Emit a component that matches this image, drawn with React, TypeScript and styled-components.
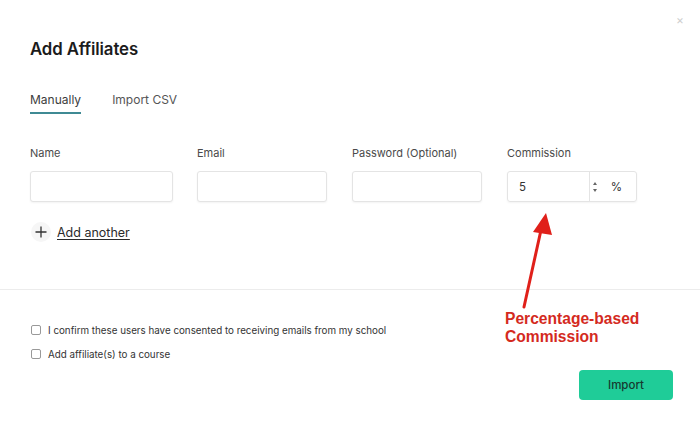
import React from "react";
import styled, { createGlobalStyle } from "styled-components";

const Global = createGlobalStyle`
  html, body { margin: 0; padding: 0; background: #fff; }
  body { font-family: Inter, "Noto Sans", "Liberation Sans", sans-serif; color: #222; }
  * { box-sizing: border-box; }
`;

const Page = styled.div`
  position: relative;
  width: 700px;
  height: 430px;
  background: #fff;
  overflow: hidden;
  display: flex;
  flex-direction: column;
`;

const Close = styled.div`
  position: absolute;
  top: 14px;
  right: 16px;
  font-size: 12px;
  color: #cfcfcf;
  line-height: 1;
`;

const Top = styled.div`
  padding: 38px 30px 0 30px;
  height: 290px;
  border-bottom: 1px solid #ececec;
`;

const Title = styled.h1`
  margin: 0;
  font-size: 16.8px;
  font-weight: 600;
  color: #1b1b1b;
  line-height: 22px;
  letter-spacing: -0.1px;
`;

const Tabs = styled.div`
  display: flex;
  gap: 31px;
  margin-top: 32px;
`;

const Tab = styled.div<{ $active?: boolean }>`
  font-size: 12px;
  color: ${(p) => (p.$active ? "#3d3d3d" : "#555")};
  padding-bottom: 4px;
  line-height: 16px;
  border-bottom: 2px solid ${(p) => (p.$active ? "#3f8a94" : "transparent")};
`;

const Fields = styled.div`
  display: grid;
  grid-template-columns: 143px 131px 131px 131px;
  column-gap: 24px;
  margin-top: 32px;
`;

const Field = styled.div`
  display: flex;
  flex-direction: column;
`;

const Label = styled.div`
  font-size: 11px;
  color: #4a4a4a;
  line-height: 14px;
  margin-bottom: 11px;
`;

const Input = styled.div<{ $w: number }>`
  width: ${(p) => p.$w}px;
  height: 31px;
  border: 1px solid #e4e4e4;
  border-radius: 3px;
  box-shadow: 0 1px 2px rgba(0, 0, 0, 0.05);
  background: #fff;
`;

const NumberGroup = styled.div`
  width: 130px;
  height: 31px;
  border: 1px solid #e4e4e4;
  border-radius: 3px;
  box-shadow: 0 1px 2px rgba(0, 0, 0, 0.05);
  display: flex;
  align-items: stretch;
  font-size: 11.5px;
  color: #333;
`;

const NumberValue = styled.div`
  width: 82px;
  border-right: 1px solid #e4e4e4;
  display: flex;
  align-items: center;
  padding-left: 11px;
`;

const Spinner = styled.div`
  width: 8px;
  display: flex;
  flex-direction: column;
  justify-content: center;
  align-items: center;
  gap: 4px;
  margin-left: 1px;
`;

const Unit = styled.div`
  flex: 1;
  display: flex;
  align-items: center;
  justify-content: center;
  font-size: 11.5px;
  padding-right: 2px;
`;

const AddRow = styled.div`
  display: flex;
  align-items: center;
  gap: 6px;
  margin-top: 20px;
  margin-left: 1px;
`;

const PlusCircle = styled.div`
  width: 20px;
  height: 20px;
  border-radius: 50%;
  background: #f6f6f6;
  display: flex;
  align-items: center;
  justify-content: center;
`;

const AddLink = styled.span`
  font-size: 12.5px;
  color: #2b2b2b;
  text-decoration: underline;
  text-underline-offset: 2px;
`;

const Bottom = styled.div`
  padding: 33px 30px 0 31px;
  display: flex;
  flex-direction: column;
`;

const CheckRow = styled.label`
  display: flex;
  align-items: center;
  gap: 7px;
  font-size: 9.8px;
  color: #333;
  height: 14px;
  margin-bottom: 10px;
`;

const Box = styled.span`
  width: 10px;
  height: 10px;
  border: 1px solid #999;
  border-radius: 2px;
  background: #fff;
`;

const Footer = styled.div`
  display: flex;
  justify-content: flex-end;
  margin-top: -1px;
`;

const ImportButton = styled.button`
  width: 94px;
  height: 30px;
  border: none;
  border-radius: 4px;
  background: #1fcc98;
  color: #163a30;
  font-family: Inter, "Noto Sans", sans-serif;
  font-size: 11.5px;
  font-weight: 500;
  margin-right: -3px;
`;

const Annotation = styled.div`
  position: absolute;
  left: 505px;
  top: 310px;
  font-family: "Liberation Sans", Arial, sans-serif;
  font-weight: 700;
  font-size: 15.6px;
  line-height: 18px;
  color: #d42a1e;
`;

const ArrowSvg = styled.svg`
  position: absolute;
  left: 0;
  top: 0;
  pointer-events: none;
`;

export default function App() {
  return (
    <>
      <Global />
      <Page>
        <Close>×</Close>
        <Top>
          <Title>Add Affiliates</Title>
          <Tabs>
            <Tab $active>Manually</Tab>
            <Tab>Import CSV</Tab>
          </Tabs>
          <Fields>
            <Field>
              <Label>Name</Label>
              <Input $w={143} />
            </Field>
            <Field>
              <Label>Email</Label>
              <Input $w={130} />
            </Field>
            <Field>
              <Label>Password (Optional)</Label>
              <Input $w={130} />
            </Field>
            <Field>
              <Label>Commission</Label>
              <NumberGroup>
                <NumberValue>5</NumberValue>
                <Spinner>
                  <svg width="4" height="3" viewBox="0 0 4 3">
                    <path d="M2 0 L4 3 L0 3 Z" fill="#666" />
                  </svg>
                  <svg width="4" height="3" viewBox="0 0 4 3">
                    <path d="M0 0 L4 0 L2 3 Z" fill="#666" />
                  </svg>
                </Spinner>
                <Unit>%</Unit>
              </NumberGroup>
            </Field>
          </Fields>
          <AddRow>
            <PlusCircle>
              <svg width="12" height="12" viewBox="0 0 12 12">
                <path d="M6 0.5V11.5M0.5 6H11.5" stroke="#333" strokeWidth="1.3" />
              </svg>
            </PlusCircle>
            <AddLink>Add another</AddLink>
          </AddRow>
        </Top>
        <Bottom>
          <CheckRow>
            <Box />
            I confirm these users have consented to receiving emails from my school
          </CheckRow>
          <CheckRow>
            <Box />
            Add affiliate(s) to a course
          </CheckRow>
          <Footer>
            <ImportButton>Import</ImportButton>
          </Footer>
        </Bottom>
        <ArrowSvg width="700" height="430" viewBox="0 0 700 430">
          <path d="M524 307 L541 230" stroke="#e0201a" strokeWidth="3" strokeLinecap="round" />
          <path d="M546 213 L533 232 L552 235 Z" fill="#e0201a" />
        </ArrowSvg>
        <Annotation>
          Percentage-based
          <br />
          Commission
        </Annotation>
      </Page>
    </>
  );
}
